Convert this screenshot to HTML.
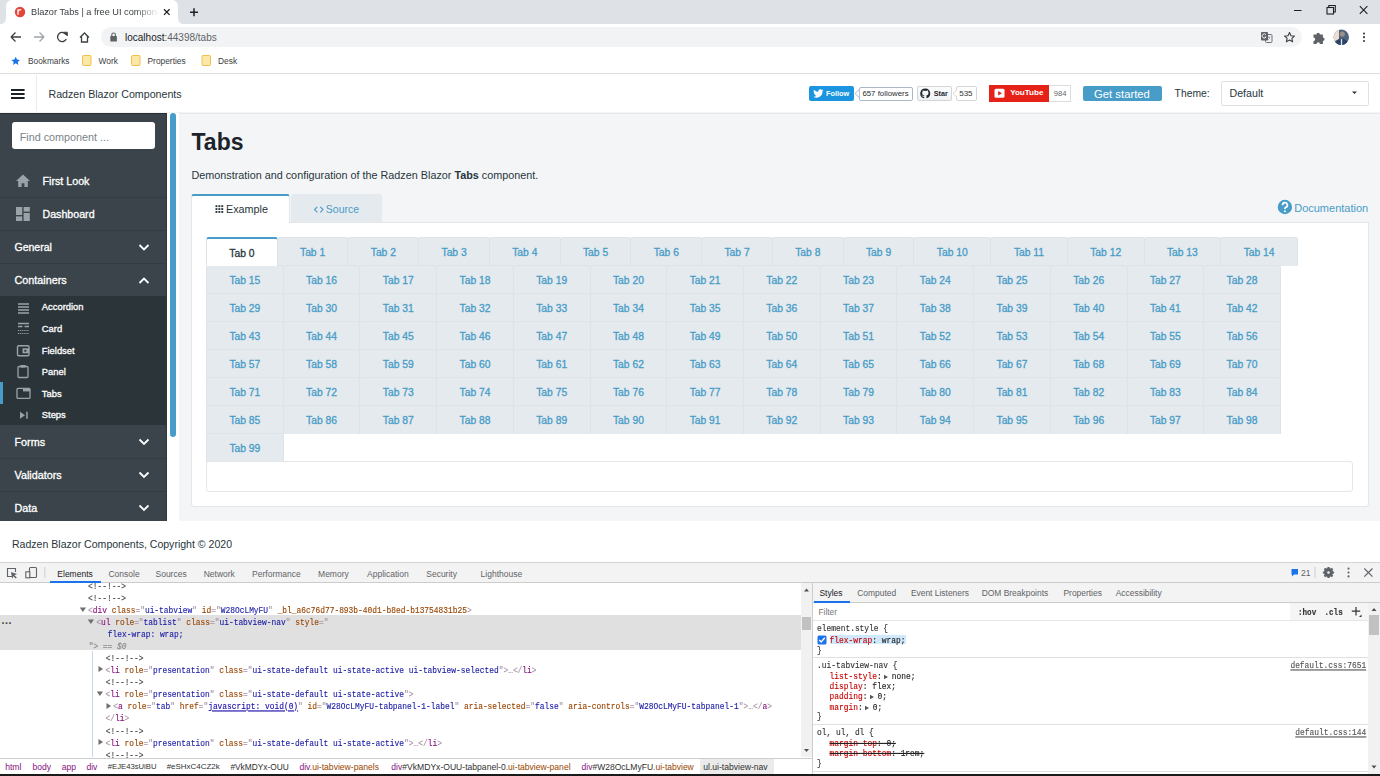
<!DOCTYPE html>
<html><head><meta charset="utf-8">
<style>
*{box-sizing:border-box;margin:0;padding:0}
html,body{width:1380px;height:776px;overflow:hidden;background:#fff;font-family:"Liberation Sans",sans-serif;position:relative}
.a{position:absolute}
.t{position:absolute;white-space:pre;line-height:1}
/* chrome */
#strip{left:0;top:0;width:1380px;height:24px;background:#dee1e6}
#ctab{left:6px;top:0;width:172px;height:24px;background:#fff;border-radius:7px 7px 0 0}
#toolbar{left:0;top:24px;width:1380px;height:24px;background:#fff}
#omni{left:101px;top:27px;width:1201px;height:20px;background:#f1f3f4;border-radius:10px}
#bm{left:0;top:48px;width:1380px;height:26px;background:#fff;border-bottom:1px solid #dadce0}
/* app header */
#hdr{left:0;top:74px;width:1380px;height:39px;background:#fff}
#side{left:0;top:113px;width:167px;height:408px;background:#3a444a;border-top:1px solid #262e34;border-right:1px solid #2e373c}
#gap{left:167px;top:113px;width:13px;height:408px;background:#fff}
#sbar{left:170px;top:113px;width:6px;height:324px;background:#479cc8;border-radius:3px}
#content{left:179px;top:113px;width:1201px;height:408px;background:#f4f5f7;border-top:1px solid #e6e9ec}
#footer{left:0;top:521px;width:1380px;height:42px;background:#fff}
#dev{left:0;top:561.5px;width:1380px;height:214.5px;background:#fff;border-top:1.5px solid #d4d4d4}
.tb{position:absolute;height:29px;background:#e5eaee;border:1px solid #dce3e9;border-bottom:0;border-radius:3px 3px 0 0;text-align:center}
.tb span{display:block;font-size:10.3px;line-height:1;padding-top:9.5px;color:#479cc8;-webkit-text-stroke:0.3px #479cc8}
.tb.act{background:#fff;border-top:2px solid #479cc8;z-index:2}
.tb.act span{color:#28363c;padding-top:9.5px;-webkit-text-stroke:0.3px #28363c}
.m{position:absolute;white-space:pre;font-family:"Liberation Mono",monospace;font-size:7.9px;line-height:10px;-webkit-text-stroke:0.12px currentColor;transform:scaleY(1.13);transform-origin:0 50%}
</style></head><body>
<div id="strip" class="a"></div>
<div id="ctab" class="a"></div>
<div id="toolbar" class="a"></div>
<div id="omni" class="a"></div>
<div id="bm" class="a"></div>

<!-- chrome tab strip content -->
<svg class="a" style="left:0;top:0" width="200" height="24">
 <path d="M0 24 Q6 24 6 18 L6 7 Q6 0 13 0 L171 0 Q178 0 178 7 L178 18 Q178 24 184 24 Z" fill="#fff"/>
 <circle cx="20" cy="12" r="5.2" fill="#e2463a"/>
 <path d="M18 9.3 v5.4 M18.2 11 q1.2 -1.6 3 -1.3" stroke="#fff" stroke-width="1.3" fill="none"/>
 <path d="M164 9.3 l5.6 5.6 M169.6 9.3 l-5.6 5.6" stroke="#202124" stroke-width="1.3"/>
 <path d="M194 8.3 v8 M190 12.3 h8" stroke="#202124" stroke-width="1.5"/>
</svg>
<div class="t" style="left:31px;top:7.5px;font-size:9.2px;color:#3c4043;width:128px;overflow:hidden;-webkit-mask-image:linear-gradient(90deg,#000 82%,transparent)">Blazor Tabs | a free UI componen</div>
<svg class="a" style="left:1280px;top:0" width="100" height="24">
 <path d="M14 10.5 h7.5" stroke="#202124" stroke-width="1"/>
 <rect x="47" y="7.5" width="6.5" height="6.5" fill="none" stroke="#202124" stroke-width="1.1"/>
 <path d="M48.8 7.3 v-1.8 h6.5 v6.5 h-1.8" fill="none" stroke="#202124" stroke-width="1.1"/>
 <path d="M79.8 6.2 l7.6 7.6 M87.4 6.2 l-7.6 7.6" stroke="#202124" stroke-width="1.1"/>
</svg>
<!-- toolbar -->
<svg class="a" style="left:0;top:24px" width="100" height="24">
 <path d="M11 13 h10 M11 13 l4.5 -4.5 M11 13 l4.5 4.5" stroke="#3c4043" stroke-width="1.3" fill="none"/>
 <path d="M44 13 h-10 M44 13 l-4.5 -4.5 M44 13 l-4.5 4.5" stroke="#a0a4a8" stroke-width="1.3" fill="none"/>
 <path d="M66 10.5 A4.6 4.6 0 1 0 66.3 15" stroke="#3c4043" stroke-width="1.4" fill="none"/>
 <path d="M63.6 8.2 L67.4 8.2 L67.4 12 Z" fill="#3c4043" stroke="#3c4043" stroke-width="0.8"/>
 <path d="M80 13.5 L84.5 9 L89 13.5 M81.5 12 V18 H87.5 V12" stroke="#3c4043" stroke-width="1.3" fill="none"/>
</svg>
<svg class="a" style="left:108px;top:31px" width="12" height="12">
 <rect x="2.3" y="5" width="6.6" height="5.5" rx="0.6" fill="#5f6368"/>
 <path d="M3.8 5.5 V3.8 A1.8 1.8 0 0 1 7.4 3.8 V5.5" stroke="#5f6368" stroke-width="1.1" fill="none"/>
</svg>
<div class="t" style="left:125px;top:33.2px;font-size:10px;color:#202124">localhost<span style="color:#5f6368">:44398/tabs</span></div>
<svg class="a" style="left:1255px;top:24px" width="125" height="24">
 <rect x="10.5" y="10.5" width="6.5" height="8" rx="1" fill="#f1f3f4" stroke="#6f7378" stroke-width="1"/>
 <path d="M12.3 13.2 h3 M13.8 12.5 v1 M12.6 16.5 q1.5 -1 2.4 -3" stroke="#8a8e92" stroke-width="0.7" fill="none"/>
 <rect x="6" y="8" width="7" height="8.5" rx="1" fill="#5f6368"/>
 <path d="M11 10.8 A2.1 2.1 0 1 0 11.1 13 H9.6" stroke="#fff" stroke-width="0.9" fill="none"/>
 <path d="M34.5 8.5 l1.5 3.2 3.4 0.4 -2.5 2.3 0.7 3.4 -3.1 -1.7 -3.1 1.7 0.7 -3.4 -2.5 -2.3 3.4 -0.4 z" fill="none" stroke="#3c4043" stroke-width="1.1" stroke-linejoin="round"/>
 <path d="M58.5 10.5 h3 a1.7 1.7 0 0 1 3.4 0 h3 v3 a1.7 1.7 0 0 1 0 3.4 v3 h-3 a1.7 1.7 0 0 0 -3.4 0 h-3 v-3 a1.7 1.7 0 0 0 0 -3.4 z" fill="#5f6368"/>
 <clipPath id="av"><circle cx="86.3" cy="13.2" r="7.7"/></clipPath>
 <g clip-path="url(#av)">
  <rect x="78" y="5" width="17" height="17" fill="#50657c"/>
  <rect x="78" y="5" width="6" height="12" fill="#ecdcd3"/>
  <circle cx="87.3" cy="10" r="2.6" fill="#9a8f8a"/>
  <path d="M78 23 Q80 15 86.5 14.5 Q93 15 95 23 Z" fill="#2b4466"/>
  <path d="M86.5 15 v7" stroke="#dfe6ee" stroke-width="1.3"/>
 </g>
 <circle cx="109" cy="9.5" r="1.1" fill="#3c4043"/><circle cx="109" cy="13.2" r="1.1" fill="#3c4043"/><circle cx="109" cy="17" r="1.1" fill="#3c4043"/>
</svg>
<!-- bookmarks -->
<svg class="a" style="left:0;top:48px" width="240" height="25">
 <path d="M15.7 8.8 l1.3 2.8 3 0.3 -2.3 2 0.7 3 -2.7 -1.6 -2.7 1.6 0.7 -3 -2.3 -2 3 -0.3 z" fill="#1a73e8"/>
 <g fill="#fce8a6" stroke="#f0c04c" stroke-width="1"><rect x="82.5" y="7.5" width="8.5" height="10" rx="1"/><rect x="131.5" y="7.5" width="8.5" height="10" rx="1"/><rect x="202" y="7.5" width="8.5" height="10" rx="1"/></g>
</svg>
<div class="t" style="left:28px;top:56.5px;font-size:8.3px;color:#3c4043">Bookmarks</div>
<div class="t" style="left:98.5px;top:56.5px;font-size:8.4px;color:#3c4043">Work</div>
<div class="t" style="left:147.5px;top:56.5px;font-size:8.4px;color:#3c4043">Properties</div>
<div class="t" style="left:218px;top:56.5px;font-size:8.4px;color:#3c4043">Desk</div>
<div id="hdr" class="a"></div>

<svg class="a" style="left:0;top:74px" width="40" height="39">
 <path d="M11 16 h13.6 M11 20 h13.6 M11 24 h13.6" stroke="#1b2227" stroke-width="1.9"/>
 <path d="M36.5 1 v36" stroke="#e8ebee" stroke-width="1"/>
</svg>
<div class="t" style="left:48.5px;top:89px;font-size:10.65px;color:#28363c">Radzen Blazor Components</div>
<!-- social -->
<div class="a" style="left:809px;top:86px;width:45px;height:15px;background:#1b95e0;border-radius:2px"></div>
<svg class="a" style="left:813px;top:88px" width="12" height="11"><path d="M10.5 2.3c-.4.2-.8.3-1.2.3.4-.3.8-.7.9-1.1-.4.2-.9.4-1.3.5a2.1 2.1 0 0 0-3.6 1.9A6 6 0 0 1 1 1.7a2.1 2.1 0 0 0 .6 2.8c-.3 0-.7-.1-.9-.3 0 1 .7 1.9 1.7 2.1-.3.1-.6.1-1 0 .3.8 1 1.4 2 1.5A4.2 4.2 0 0 1 .3 8.7 6 6 0 0 0 9.5 3.4v-.3c.4-.2.7-.5 1-.8z" fill="#fff"/></svg>
<div class="t" style="left:826px;top:89.8px;font-size:7.3px;color:#fff;font-weight:bold">Follow</div>
<div class="a" style="left:858.5px;top:86.5px;width:54.5px;height:14.5px;background:#fff;border:1px solid #aab8c6;border-radius:2px"></div>
<svg class="a" style="left:854px;top:89px" width="6" height="9"><path d="M5.2 0.5 L1 4.5 L5.2 8.5" fill="#fff" stroke="#aab8c6" stroke-width="1"/></svg>
<div class="t" style="left:862.4px;top:89.6px;font-size:7.85px;color:#292f33">657 followers</div>
<div class="a" style="left:917px;top:86px;width:35px;height:15px;background:linear-gradient(#fafbfc,#eff3f6);border:1px solid #d5d5d5;border-radius:2px"></div>
<svg class="a" style="left:920px;top:88px" width="11" height="11"><path d="M5.5.5a5 5 0 0 0-1.6 9.8c.3 0 .3-.1.3-.3V9c-1.4.3-1.7-.6-1.7-.6-.2-.6-.6-.8-.6-.8-.5-.3 0-.3 0-.3.5 0 .8.5.8.5.4.8 1.2.6 1.5.4 0-.3.2-.5.3-.6-1.1-.1-2.3-.6-2.3-2.5 0-.5.2-1 .5-1.3 0-.1-.2-.6 0-1.3 0 0 .4-.1 1.4.5a4.8 4.8 0 0 1 2.5 0c1-.7 1.4-.5 1.4-.5.3.7.1 1.2 0 1.3.3.4.5.8.5 1.3 0 1.9-1.2 2.4-2.3 2.5.2.2.3.5.3.9v1.4c0 .1.1.3.4.3A5 5 0 0 0 5.5.5z" fill="#24292e"/></svg>
<div class="t" style="left:933.8px;top:89.8px;font-size:7.2px;color:#24292e;font-weight:bold">Star</div>
<div class="a" style="left:955.5px;top:86px;width:21px;height:15px;background:#fff;border:1px solid #d5d5d5;border-radius:2px"></div>
<svg class="a" style="left:951.5px;top:89px" width="6" height="9"><path d="M5.2 0.5 L1 4.5 L5.2 8.5" fill="#fff" stroke="#d5d5d5" stroke-width="1"/></svg>
<div class="t" style="left:959.2px;top:89.6px;font-size:8px;color:#333">535</div>
<div class="a" style="left:989px;top:85px;width:60px;height:17px;background:#e62117"></div>
<svg class="a" style="left:994px;top:88px" width="12" height="11"><rect x="0.5" y="0.8" width="10" height="9" rx="1.5" fill="#fff"/><path d="M4.2 3 L8 5.3 L4.2 7.6 Z" fill="#e62117"/></svg>
<div class="t" style="left:1010.2px;top:88.8px;font-size:8.05px;color:#fff;font-weight:bold">YouTube</div>
<div class="a" style="left:1049px;top:85px;width:22px;height:17px;background:#fff;border:1px solid #ddd;border-left:0"></div>
<div class="t" style="left:1053.7px;top:89.8px;font-size:7.6px;color:#666">984</div>
<div class="a" style="left:1083px;top:85.5px;width:79px;height:15.5px;background:#479cc8;border-radius:2px"></div>
<div class="t" style="left:1094px;top:89px;font-size:11.3px;color:#fff">Get started</div>
<div class="t" style="left:1174.6px;top:89.3px;font-size:10.35px;color:#28363c">Theme:</div>
<div class="a" style="left:1221px;top:81px;width:147.5px;height:25px;background:#fff;border:1px solid #dfe3e7;border-radius:2px"></div>
<div class="t" style="left:1229.5px;top:88px;font-size:10.65px;color:#28363c">Default</div>
<svg class="a" style="left:1350px;top:90px" width="10" height="6"><path d="M2 1.5 L7 1.5 L4.5 4 Z" fill="#28363c"/></svg>
<div class="a" style="left:0;top:112px;width:1380px;height:1px;background:#f3f4f6"></div>
<div id="side" class="a"></div>

<div class="a" style="left:11.5px;top:122px;width:143.5px;height:26.5px;background:#fff;border-radius:3px"></div>
<div class="t" style="left:19.7px;top:132px;font-size:10.8px;color:#7a838a">Find component ...</div>
<!-- separators -->
<div class="a" style="left:0;top:197px;width:166px;height:1px;background:#333c41"></div>
<div class="a" style="left:0;top:230px;width:166px;height:1px;background:#333c41"></div>
<div class="a" style="left:0;top:263px;width:166px;height:1px;background:#333c41"></div>
<div class="a" style="left:0;top:296px;width:166px;height:129px;background:#2b3439"></div>
<div class="a" style="left:0;top:458px;width:166px;height:1px;background:#333c41"></div>
<div class="a" style="left:0;top:491px;width:166px;height:1px;background:#333c41"></div>
<div class="a" style="left:0;top:382px;width:3px;height:21.5px;background:#479cc8"></div>
<svg class="a" style="left:0;top:113px" width="166" height="408">
 <!-- home -->
 <path d="M23 61.5 L16 68 H18.2 V74 H21.6 V70.2 H24.4 V74 H27.8 V68 H30 Z" fill="#9aa3a8"/>
 <!-- dashboard -->
 <rect x="16" y="94" width="6.2" height="8" fill="#9aa3a8"/><rect x="16" y="103.4" width="6.2" height="4.6" fill="#9aa3a8"/>
 <rect x="23.6" y="94" width="6.2" height="4.6" fill="#9aa3a8"/><rect x="23.6" y="100" width="6.2" height="8" fill="#9aa3a8"/>
 <path d="M139.5 132.0 l4.5 4.5 l4.5 -4.5" stroke="#fff" stroke-width="1.8" fill="none"/> <path d="M139.5 170.0 l4.5 -4.5 l4.5 4.5" stroke="#fff" stroke-width="1.8" fill="none"/> <path d="M139.5 326.5 l4.5 4.5 l4.5 -4.5" stroke="#fff" stroke-width="1.8" fill="none"/> <path d="M139.5 359.5 l4.5 4.5 l4.5 -4.5" stroke="#fff" stroke-width="1.8" fill="none"/> <path d="M139.5 392.5 l4.5 4.5 l4.5 -4.5" stroke="#fff" stroke-width="1.8" fill="none"/>
 <!-- accordion -->
 <path d="M18 191 h11 M18 194 h11 M18 197 h11 M18 200 h11" stroke="#9aa3a8" stroke-width="1.3"/>
 <!-- card -->
 <path d="M18 210.5 h11 M18 213.5 h4.5 M24.5 213.5 h4.5" stroke="#9aa3a8" stroke-width="1.3"/>
 <path d="M18 217.5 h11 M18 220.5 h11" stroke="#9aa3a8" stroke-width="1.2" stroke-dasharray="1.2 0.9"/>
 <g transform="translate(0,2.3)"><!-- fieldset -->
 <rect x="17.5" y="230.5" width="11.5" height="10" rx="1.2" fill="none" stroke="#9aa3a8" stroke-width="1.4"/>
 <rect x="22.5" y="233" width="6.5" height="5" fill="#9aa3a8"/><rect x="24.3" y="234.6" width="2" height="1.8" fill="#2b3439"/>
 </g><g transform="translate(0,0.5)"><!-- panel -->
 <rect x="18" y="253" width="10" height="11" rx="1" fill="none" stroke="#9aa3a8" stroke-width="1.3"/>
 <rect x="20.5" y="251.5" width="5" height="2.6" fill="#9aa3a8"/>
 </g><g transform="translate(0,1.4)"><!-- tabs -->
 <rect x="17" y="274" width="13" height="10" rx="1" fill="none" stroke="#9aa3a8" stroke-width="1.3"/>
 <rect x="23" y="274" width="7" height="3" fill="#9aa3a8"/>
 </g><g transform="translate(0,2.8)"><!-- steps -->
 <path d="M20 296 L25 299.5 L20 303 Z" fill="#9aa3a8"/><rect x="26.2" y="296" width="1.5" height="7" fill="#9aa3a8"/></g>
</svg>
<div class="t" style="left:42.5px;top:176.2px;font-size:10.7px;color:#fff;-webkit-text-stroke:0.3px #fff">First Look</div>
<div class="t" style="left:42.5px;top:209.2px;font-size:10.65px;color:#fff;-webkit-text-stroke:0.3px #fff">Dashboard</div>
<div class="t" style="left:14.5px;top:242.2px;font-size:10.5px;color:#fff;-webkit-text-stroke:0.3px #fff">General</div>
<div class="t" style="left:14.5px;top:275.2px;font-size:10.8px;color:#fff;-webkit-text-stroke:0.3px #fff">Containers</div>
<div class="t" style="left:41.8px;top:302.1px;font-size:9.4px;color:#fff;-webkit-text-stroke:0.3px #fff">Accordion</div>
<div class="t" style="left:41.8px;top:323.9px;font-size:9.4px;color:#fff;-webkit-text-stroke:0.3px #fff">Card</div>
<div class="t" style="left:41.8px;top:345.6px;font-size:9.4px;color:#fff;-webkit-text-stroke:0.3px #fff">Fieldset</div>
<div class="t" style="left:41.8px;top:366.9px;font-size:9.4px;color:#fff;-webkit-text-stroke:0.3px #fff">Panel</div>
<div class="t" style="left:41.8px;top:388.6px;font-size:9.4px;color:#fff;-webkit-text-stroke:0.3px #fff">Tabs</div>
<div class="t" style="left:41.8px;top:410.1px;font-size:9.4px;color:#fff;-webkit-text-stroke:0.3px #fff">Steps</div>
<div class="t" style="left:14.5px;top:437.4px;font-size:10.8px;color:#fff;-webkit-text-stroke:0.3px #fff">Forms</div>
<div class="t" style="left:14.5px;top:470.2px;font-size:10.8px;color:#fff;-webkit-text-stroke:0.3px #fff">Validators</div>
<div class="t" style="left:14.5px;top:503px;font-size:10.8px;color:#fff;-webkit-text-stroke:0.3px #fff">Data</div>
<div id="gap" class="a"></div>
<div id="sbar" class="a"></div>
<div id="content" class="a"></div>
<div id="footer" class="a"></div>
<div class="t" style="left:191.5px;top:130.6px;font-size:23px;font-weight:bold;color:#1c2329">Tabs</div>
<div class="t" style="left:191.5px;top:170.2px;font-size:10.8px;color:#28363c">Demonstration and configuration of the Radzen Blazor <b>Tabs</b> component.</div>
<div class="a" style="left:191px;top:222px;width:1178px;height:285px;background:#fff;border:1px solid #e3e7ea;border-radius:0 0 3px 3px"></div>
<div class="a" style="left:191px;top:194px;width:99px;height:29px;background:#fff;border:1px solid #e3e7ea;border-top:2px solid #479cc8;border-bottom:0;border-radius:3px 3px 0 0"></div>
<div class="a" style="left:291px;top:194px;width:90.6px;height:28px;background:#e5eaee;border-radius:3px 3px 0 0"></div>
<svg class="a" style="left:214px;top:203.8px" width="12" height="12"><g fill="#28363c"><rect x="1.5" y="1.2" width="1.9" height="1.9"/><rect x="4.4" y="1.2" width="1.9" height="1.9"/><rect x="7.3" y="1.2" width="1.9" height="1.9"/><rect x="1.5" y="4.1" width="1.9" height="1.9"/><rect x="4.4" y="4.1" width="1.9" height="1.9"/><rect x="7.3" y="4.1" width="1.9" height="1.9"/><rect x="1.5" y="7" width="1.9" height="1.9"/><rect x="4.4" y="7" width="1.9" height="1.9"/><rect x="7.3" y="7" width="1.9" height="1.9"/></g></svg>
<div class="t" style="left:226px;top:204.1px;font-size:10.8px;color:#28363c">Example</div>
<svg class="a" style="left:313px;top:203.8px" width="13" height="12"><path d="M4.3 2.8 L1.6 5.6 L4.3 8.4 M7.3 2.8 L10 5.6 L7.3 8.4" stroke="#479cc8" stroke-width="1.15" fill="none"/></svg>
<div class="t" style="left:325.8px;top:204.1px;font-size:10.5px;color:#479cc8">Source</div>
<svg class="a" style="left:1277px;top:199px" width="16" height="16"><circle cx="7.9" cy="8" r="7.2" fill="#479cc8"/><path d="M5.6 6.2 A2.4 2.4 0 1 1 8.6 8.4 Q7.9 8.8 7.9 9.7 V10" stroke="#fff" stroke-width="1.7" fill="none"/><circle cx="7.9" cy="12.2" r="1" fill="#fff"/></svg>
<div class="t" style="left:1294.2px;top:202.5px;font-size:11px;color:#479cc8">Documentation</div>
<div class="tb act" style="left:206.00px;top:237px;width:71.74px"><span>Tab 0</span></div>
<div class="tb" style="left:276.74px;top:237px;width:71.74px"><span>Tab 1</span></div>
<div class="tb" style="left:347.48px;top:237px;width:71.74px"><span>Tab 2</span></div>
<div class="tb" style="left:418.22px;top:237px;width:71.74px"><span>Tab 3</span></div>
<div class="tb" style="left:488.96px;top:237px;width:71.74px"><span>Tab 4</span></div>
<div class="tb" style="left:559.70px;top:237px;width:71.74px"><span>Tab 5</span></div>
<div class="tb" style="left:630.44px;top:237px;width:71.74px"><span>Tab 6</span></div>
<div class="tb" style="left:701.18px;top:237px;width:71.74px"><span>Tab 7</span></div>
<div class="tb" style="left:771.92px;top:237px;width:71.74px"><span>Tab 8</span></div>
<div class="tb" style="left:842.66px;top:237px;width:71.74px"><span>Tab 9</span></div>
<div class="tb" style="left:913.40px;top:237px;width:77.71px"><span>Tab 10</span></div>
<div class="tb" style="left:990.11px;top:237px;width:77.71px"><span>Tab 11</span></div>
<div class="tb" style="left:1066.82px;top:237px;width:77.71px"><span>Tab 12</span></div>
<div class="tb" style="left:1143.53px;top:237px;width:77.71px"><span>Tab 13</span></div>
<div class="tb" style="left:1220.24px;top:237px;width:77.71px"><span>Tab 14</span></div>
<div class="tb" style="left:206.00px;top:265px;width:77.71px"><span>Tab 15</span></div>
<div class="tb" style="left:282.71px;top:265px;width:77.71px"><span>Tab 16</span></div>
<div class="tb" style="left:359.42px;top:265px;width:77.71px"><span>Tab 17</span></div>
<div class="tb" style="left:436.13px;top:265px;width:77.71px"><span>Tab 18</span></div>
<div class="tb" style="left:512.84px;top:265px;width:77.71px"><span>Tab 19</span></div>
<div class="tb" style="left:589.55px;top:265px;width:77.71px"><span>Tab 20</span></div>
<div class="tb" style="left:666.26px;top:265px;width:77.71px"><span>Tab 21</span></div>
<div class="tb" style="left:742.97px;top:265px;width:77.71px"><span>Tab 22</span></div>
<div class="tb" style="left:819.68px;top:265px;width:77.71px"><span>Tab 23</span></div>
<div class="tb" style="left:896.39px;top:265px;width:77.71px"><span>Tab 24</span></div>
<div class="tb" style="left:973.10px;top:265px;width:77.71px"><span>Tab 25</span></div>
<div class="tb" style="left:1049.81px;top:265px;width:77.71px"><span>Tab 26</span></div>
<div class="tb" style="left:1126.52px;top:265px;width:77.71px"><span>Tab 27</span></div>
<div class="tb" style="left:1203.23px;top:265px;width:77.71px"><span>Tab 28</span></div>
<div class="tb" style="left:206.00px;top:293px;width:77.71px"><span>Tab 29</span></div>
<div class="tb" style="left:282.71px;top:293px;width:77.71px"><span>Tab 30</span></div>
<div class="tb" style="left:359.42px;top:293px;width:77.71px"><span>Tab 31</span></div>
<div class="tb" style="left:436.13px;top:293px;width:77.71px"><span>Tab 32</span></div>
<div class="tb" style="left:512.84px;top:293px;width:77.71px"><span>Tab 33</span></div>
<div class="tb" style="left:589.55px;top:293px;width:77.71px"><span>Tab 34</span></div>
<div class="tb" style="left:666.26px;top:293px;width:77.71px"><span>Tab 35</span></div>
<div class="tb" style="left:742.97px;top:293px;width:77.71px"><span>Tab 36</span></div>
<div class="tb" style="left:819.68px;top:293px;width:77.71px"><span>Tab 37</span></div>
<div class="tb" style="left:896.39px;top:293px;width:77.71px"><span>Tab 38</span></div>
<div class="tb" style="left:973.10px;top:293px;width:77.71px"><span>Tab 39</span></div>
<div class="tb" style="left:1049.81px;top:293px;width:77.71px"><span>Tab 40</span></div>
<div class="tb" style="left:1126.52px;top:293px;width:77.71px"><span>Tab 41</span></div>
<div class="tb" style="left:1203.23px;top:293px;width:77.71px"><span>Tab 42</span></div>
<div class="tb" style="left:206.00px;top:321px;width:77.71px"><span>Tab 43</span></div>
<div class="tb" style="left:282.71px;top:321px;width:77.71px"><span>Tab 44</span></div>
<div class="tb" style="left:359.42px;top:321px;width:77.71px"><span>Tab 45</span></div>
<div class="tb" style="left:436.13px;top:321px;width:77.71px"><span>Tab 46</span></div>
<div class="tb" style="left:512.84px;top:321px;width:77.71px"><span>Tab 47</span></div>
<div class="tb" style="left:589.55px;top:321px;width:77.71px"><span>Tab 48</span></div>
<div class="tb" style="left:666.26px;top:321px;width:77.71px"><span>Tab 49</span></div>
<div class="tb" style="left:742.97px;top:321px;width:77.71px"><span>Tab 50</span></div>
<div class="tb" style="left:819.68px;top:321px;width:77.71px"><span>Tab 51</span></div>
<div class="tb" style="left:896.39px;top:321px;width:77.71px"><span>Tab 52</span></div>
<div class="tb" style="left:973.10px;top:321px;width:77.71px"><span>Tab 53</span></div>
<div class="tb" style="left:1049.81px;top:321px;width:77.71px"><span>Tab 54</span></div>
<div class="tb" style="left:1126.52px;top:321px;width:77.71px"><span>Tab 55</span></div>
<div class="tb" style="left:1203.23px;top:321px;width:77.71px"><span>Tab 56</span></div>
<div class="tb" style="left:206.00px;top:349px;width:77.71px"><span>Tab 57</span></div>
<div class="tb" style="left:282.71px;top:349px;width:77.71px"><span>Tab 58</span></div>
<div class="tb" style="left:359.42px;top:349px;width:77.71px"><span>Tab 59</span></div>
<div class="tb" style="left:436.13px;top:349px;width:77.71px"><span>Tab 60</span></div>
<div class="tb" style="left:512.84px;top:349px;width:77.71px"><span>Tab 61</span></div>
<div class="tb" style="left:589.55px;top:349px;width:77.71px"><span>Tab 62</span></div>
<div class="tb" style="left:666.26px;top:349px;width:77.71px"><span>Tab 63</span></div>
<div class="tb" style="left:742.97px;top:349px;width:77.71px"><span>Tab 64</span></div>
<div class="tb" style="left:819.68px;top:349px;width:77.71px"><span>Tab 65</span></div>
<div class="tb" style="left:896.39px;top:349px;width:77.71px"><span>Tab 66</span></div>
<div class="tb" style="left:973.10px;top:349px;width:77.71px"><span>Tab 67</span></div>
<div class="tb" style="left:1049.81px;top:349px;width:77.71px"><span>Tab 68</span></div>
<div class="tb" style="left:1126.52px;top:349px;width:77.71px"><span>Tab 69</span></div>
<div class="tb" style="left:1203.23px;top:349px;width:77.71px"><span>Tab 70</span></div>
<div class="tb" style="left:206.00px;top:377px;width:77.71px"><span>Tab 71</span></div>
<div class="tb" style="left:282.71px;top:377px;width:77.71px"><span>Tab 72</span></div>
<div class="tb" style="left:359.42px;top:377px;width:77.71px"><span>Tab 73</span></div>
<div class="tb" style="left:436.13px;top:377px;width:77.71px"><span>Tab 74</span></div>
<div class="tb" style="left:512.84px;top:377px;width:77.71px"><span>Tab 75</span></div>
<div class="tb" style="left:589.55px;top:377px;width:77.71px"><span>Tab 76</span></div>
<div class="tb" style="left:666.26px;top:377px;width:77.71px"><span>Tab 77</span></div>
<div class="tb" style="left:742.97px;top:377px;width:77.71px"><span>Tab 78</span></div>
<div class="tb" style="left:819.68px;top:377px;width:77.71px"><span>Tab 79</span></div>
<div class="tb" style="left:896.39px;top:377px;width:77.71px"><span>Tab 80</span></div>
<div class="tb" style="left:973.10px;top:377px;width:77.71px"><span>Tab 81</span></div>
<div class="tb" style="left:1049.81px;top:377px;width:77.71px"><span>Tab 82</span></div>
<div class="tb" style="left:1126.52px;top:377px;width:77.71px"><span>Tab 83</span></div>
<div class="tb" style="left:1203.23px;top:377px;width:77.71px"><span>Tab 84</span></div>
<div class="tb" style="left:206.00px;top:405px;width:77.71px"><span>Tab 85</span></div>
<div class="tb" style="left:282.71px;top:405px;width:77.71px"><span>Tab 86</span></div>
<div class="tb" style="left:359.42px;top:405px;width:77.71px"><span>Tab 87</span></div>
<div class="tb" style="left:436.13px;top:405px;width:77.71px"><span>Tab 88</span></div>
<div class="tb" style="left:512.84px;top:405px;width:77.71px"><span>Tab 89</span></div>
<div class="tb" style="left:589.55px;top:405px;width:77.71px"><span>Tab 90</span></div>
<div class="tb" style="left:666.26px;top:405px;width:77.71px"><span>Tab 91</span></div>
<div class="tb" style="left:742.97px;top:405px;width:77.71px"><span>Tab 92</span></div>
<div class="tb" style="left:819.68px;top:405px;width:77.71px"><span>Tab 93</span></div>
<div class="tb" style="left:896.39px;top:405px;width:77.71px"><span>Tab 94</span></div>
<div class="tb" style="left:973.10px;top:405px;width:77.71px"><span>Tab 95</span></div>
<div class="tb" style="left:1049.81px;top:405px;width:77.71px"><span>Tab 96</span></div>
<div class="tb" style="left:1126.52px;top:405px;width:77.71px"><span>Tab 97</span></div>
<div class="tb" style="left:1203.23px;top:405px;width:77.71px"><span>Tab 98</span></div>
<div class="tb" style="left:206.00px;top:433px;width:77.71px"><span>Tab 99</span></div>
<div class="a" style="left:206px;top:461px;width:1147px;height:30.5px;border:1px solid #e3e7ea;border-radius:3px"></div>
<div class="t" style="left:12px;top:539px;font-size:10.55px;color:#28363c">Radzen Blazor Components, Copyright © 2020</div>

<div id="dev" class="a"></div>
<div class="a" style="left:0;top:563px;width:1380px;height:20px;background:#f3f3f3;border-bottom:1px solid #cccccc"></div>
<div class="a" style="left:0;top:615px;width:801px;height:35px;background:#e0e0e0"></div>
<div class="t" style="left:1px;top:614.5px;font-size:11px;color:#444;font-weight:bold;font-family:'Liberation Sans'">…</div>
<div class="a" style="left:91.5px;top:651px;width:1px;height:106px;background:#c7d7ea"></div>
<div class="m" style="left:88px;top:581.6px"><span style="color:#474747">&lt;!--!--&gt;</span></div>
<div class="m" style="left:88px;top:593.6px"><span style="color:#474747">&lt;!--!--&gt;</span></div>
<div class="m" style="left:88px;top:605.9px"><span style="color:#a894a6">&lt;</span><span style="color:#881280">div</span><span style="color:#881280"> </span><span style="color:#994500">class</span><span style="color:#a894a6">="</span><span style="color:#1a1aa6">ui-tabview</span><span style="color:#a894a6">"</span><span style="color:#881280"> </span><span style="color:#994500">id</span><span style="color:#a894a6">="</span><span style="color:#1a1aa6">W28OcLMyFU</span><span style="color:#a894a6">"</span><span style="color:#881280"> </span><span style="color:#994500">_bl_a6c76d77-893b-40d1-b8ed-b13754831b25</span><span style="color:#a894a6">&gt;</span></div>
<svg class="a" style="left:78.5px;top:606.0px" width="8" height="7"><path d="M0.8 1.5 L7 1.5 L3.9 6 Z" fill="#6e6e6e"/></svg>
<div class="m" style="left:96.2px;top:618.1px"><span style="color:#a894a6">&lt;</span><span style="color:#881280">ul</span><span style="color:#881280"> </span><span style="color:#994500">role</span><span style="color:#a894a6">="</span><span style="color:#1a1aa6">tablist</span><span style="color:#a894a6">"</span><span style="color:#881280"> </span><span style="color:#994500">class</span><span style="color:#a894a6">="</span><span style="color:#1a1aa6">ui-tabview-nav</span><span style="color:#a894a6">"</span><span style="color:#881280"> </span><span style="color:#994500">style</span><span style="color:#a894a6">="</span></div>
<svg class="a" style="left:86.7px;top:618.2px" width="8" height="7"><path d="M0.8 1.5 L7 1.5 L3.9 6 Z" fill="#6e6e6e"/></svg>
<div class="m" style="left:107.8px;top:629.9px"><span style="color:#1a1aa6">flex-wrap: wrap;</span></div>
<div class="m" style="left:88.7px;top:641.8px"><span style="color:#8a8a8a">"&gt;</span></div>
<div class="m" style="left:105.7px;top:653.6px"><span style="color:#474747">&lt;!--!--&gt;</span></div>
<div class="m" style="left:105.5px;top:665.6px"><span style="color:#a894a6">&lt;</span><span style="color:#881280">li</span><span style="color:#881280"> </span><span style="color:#994500">role</span><span style="color:#a894a6">="</span><span style="color:#1a1aa6">presentation</span><span style="color:#a894a6">"</span><span style="color:#881280"> </span><span style="color:#994500">class</span><span style="color:#a894a6">="</span><span style="color:#1a1aa6">ui-state-default ui-state-active ui-tabview-selected</span><span style="color:#a894a6">"</span><span style="color:#a894a6">&gt;…&lt;/</span><span style="color:#881280">li</span><span style="color:#a894a6">&gt;</span></div>
<svg class="a" style="left:97.0px;top:665.2px" width="7" height="8"><path d="M1.5 1 L6 4 L1.5 7 Z" fill="#6e6e6e"/></svg>
<div class="m" style="left:105.7px;top:677.6px"><span style="color:#474747">&lt;!--!--&gt;</span></div>
<div class="m" style="left:105.5px;top:689.9px"><span style="color:#a894a6">&lt;</span><span style="color:#881280">li</span><span style="color:#881280"> </span><span style="color:#994500">role</span><span style="color:#a894a6">="</span><span style="color:#1a1aa6">presentation</span><span style="color:#a894a6">"</span><span style="color:#881280"> </span><span style="color:#994500">class</span><span style="color:#a894a6">="</span><span style="color:#1a1aa6">ui-state-default ui-state-active</span><span style="color:#a894a6">"</span><span style="color:#a894a6">&gt;</span></div>
<svg class="a" style="left:96.0px;top:690.0px" width="8" height="7"><path d="M0.8 1.5 L7 1.5 L3.9 6 Z" fill="#6e6e6e"/></svg>
<div class="m" style="left:113.3px;top:702.1px"><span style="color:#a894a6">&lt;</span><span style="color:#881280">a</span><span style="color:#881280"> </span><span style="color:#994500">role</span><span style="color:#a894a6">="</span><span style="color:#1a1aa6">tab</span><span style="color:#a894a6">"</span><span style="color:#881280"> </span><span style="color:#994500">href</span><span style="color:#a894a6">="</span><span style="color:#1a0dab;text-decoration:underline">javascript: void(0)</span><span style="color:#a894a6">"</span><span style="color:#881280"> </span><span style="color:#994500">id</span><span style="color:#a894a6">="</span><span style="color:#1a1aa6">W28OcLMyFU-tabpanel-1-label</span><span style="color:#a894a6">"</span><span style="color:#881280"> </span><span style="color:#994500">aria-selected</span><span style="color:#a894a6">="</span><span style="color:#1a1aa6">false</span><span style="color:#a894a6">"</span><span style="color:#881280"> </span><span style="color:#994500">aria-controls</span><span style="color:#a894a6">="</span><span style="color:#1a1aa6">W28OcLMyFU-tabpanel-1</span><span style="color:#a894a6">"</span><span style="color:#a894a6">&gt;…&lt;/</span><span style="color:#881280">a</span><span style="color:#a894a6">&gt;</span></div>
<svg class="a" style="left:104.8px;top:701.7px" width="7" height="8"><path d="M1.5 1 L6 4 L1.5 7 Z" fill="#6e6e6e"/></svg>
<div class="m" style="left:105.5px;top:714.3px"><span style="color:#a894a6">&lt;/</span><span style="color:#881280">li</span><span style="color:#a894a6">&gt;</span></div>
<div class="m" style="left:105.7px;top:726.6px"><span style="color:#474747">&lt;!--!--&gt;</span></div>
<div class="m" style="left:105.5px;top:738.6px"><span style="color:#a894a6">&lt;</span><span style="color:#881280">li</span><span style="color:#881280"> </span><span style="color:#994500">role</span><span style="color:#a894a6">="</span><span style="color:#1a1aa6">presentation</span><span style="color:#a894a6">"</span><span style="color:#881280"> </span><span style="color:#994500">class</span><span style="color:#a894a6">="</span><span style="color:#1a1aa6">ui-state-default ui-state-active</span><span style="color:#a894a6">"</span><span style="color:#a894a6">&gt;…&lt;/</span><span style="color:#881280">li</span><span style="color:#a894a6">&gt;</span></div>
<svg class="a" style="left:97.0px;top:738.2px" width="7" height="8"><path d="M1.5 1 L6 4 L1.5 7 Z" fill="#6e6e6e"/></svg>
<div class="m" style="left:105.7px;top:750.6px"><span style="color:#474747">&lt;!--!--&gt;</span></div>
<div class="m" style="left:102.8px;top:641.8px;color:#8a8a8a;font-style:italic">== $0</div>
<div class="t" style="left:57.33px;top:569.6px;font-size:8.5px;color:#202124">Elements</div>
<div class="t" style="left:108.46px;top:569.6px;font-size:8.5px;color:#5f6368">Console</div>
<div class="t" style="left:155.51px;top:569.6px;font-size:8.5px;color:#5f6368">Sources</div>
<div class="t" style="left:203.66px;top:569.6px;font-size:8.5px;color:#5f6368">Network</div>
<div class="t" style="left:252.12px;top:569.6px;font-size:8.5px;color:#5f6368">Performance</div>
<div class="t" style="left:318.05px;top:569.6px;font-size:8.5px;color:#5f6368">Memory</div>
<div class="t" style="left:367.06px;top:569.6px;font-size:8.5px;color:#5f6368">Application</div>
<div class="t" style="left:426.25px;top:569.6px;font-size:8.5px;color:#5f6368">Security</div>
<div class="t" style="left:480.60px;top:569.6px;font-size:8.5px;color:#5f6368">Lighthouse</div>
<div class="a" style="left:50px;top:581px;width:51px;height:2px;background:#1a73e8"></div>
<svg class="a" style="left:0;top:563px" width="50" height="19">
 <path d="M12.5 13.5 H7.5 V5.5 H15.5 V9" fill="none" stroke="#5f6368" stroke-width="1.1"/>
 <path d="M11 9 L17 11 L14.4 12.2 L16.8 14.6 L15.8 15.6 L13.4 13.2 L12.2 15.8 Z" fill="#5f6368"/>
 <rect x="29.5" y="4.5" width="7" height="10" rx="1" fill="none" stroke="#5f6368" stroke-width="1.1"/>
 <rect x="25.8" y="8.8" width="4" height="6" fill="#f3f3f3" stroke="#5f6368" stroke-width="1.1"/>
 <path d="M44.8 4 V15" stroke="#cbcdd1" stroke-width="1"/>
</svg>
<svg class="a" style="left:1285px;top:563px" width="95" height="19">
 <path d="M6.5 6 H13 V11.5 H9 L7 13.5 V11.5 H6.5 Z" fill="#1a73e8"/>
 <path d="M30 4 V15" stroke="#cbcdd1" stroke-width="1"/>
 <g transform="translate(43.5,9.5)"><circle r="3.4" fill="none" stroke="#5f6368" stroke-width="2.3"/><g stroke="#5f6368" stroke-width="2.2"><path d="M0 -5.6 V5.6 M-5.6 0 H5.6 M-4 -4 L4 4 M-4 4 L4 -4"/></g><circle r="1.3" fill="#f3f3f3"/></g>
 <circle cx="63.5" cy="5.6" r="1.05" fill="#5f6368"/><circle cx="63.5" cy="9.5" r="1.05" fill="#5f6368"/><circle cx="63.5" cy="13.4" r="1.05" fill="#5f6368"/>
 <path d="M79.3 5.5 L87.5 13.7 M87.5 5.5 L79.3 13.7" stroke="#5f6368" stroke-width="1.2"/>
</svg>
<div class="t" style="left:1301px;top:568.5px;font-size:8.6px;color:#5f6368">21</div>
<div class="a" style="left:801px;top:583px;width:11px;height:174px;background:#f1f1f1"></div>
<svg class="a" style="left:801px;top:583px" width="11" height="174"><path d="M3 8.5 L5.5 5.5 L8 8.5 Z" fill="#505050"/><path d="M3 166 L5.5 169 L8 166 Z" fill="#505050"/></svg>
<div class="a" style="left:802px;top:616.5px;width:9px;height:13px;background:#c1c1c1"></div>
<div class="a" style="left:812px;top:583px;width:1px;height:193px;background:#cbcdd1"></div>
<div class="a" style="left:813px;top:583px;width:567px;height:19.5px;background:#f3f3f3;border-bottom:1px solid #cccccc"></div>
<div class="t" style="left:819.49px;top:588.5px;font-size:8.45px;color:#202124">Styles</div>
<div class="t" style="left:857.26px;top:588.5px;font-size:8.45px;color:#5f6368">Computed</div>
<div class="t" style="left:910.88px;top:588.5px;font-size:8.45px;color:#5f6368">Event Listeners</div>
<div class="t" style="left:981.66px;top:588.5px;font-size:8.45px;color:#5f6368">DOM Breakpoints</div>
<div class="t" style="left:1063.44px;top:588.5px;font-size:8.45px;color:#5f6368">Properties</div>
<div class="t" style="left:1115.69px;top:588.5px;font-size:8.45px;color:#5f6368">Accessibility</div>
<div class="a" style="left:813.5px;top:601px;width:36px;height:2px;background:#1a73e8"></div>
<div class="a" style="left:813px;top:603px;width:555px;height:18px;background:#fff;border-bottom:1px solid #e6e6e6"></div>
<div class="a" style="left:1290px;top:603px;width:78px;height:17px;background:#f5f5f5"></div>
<div class="t" style="left:818.5px;top:607.5px;font-size:8.3px;color:#757575">Filter</div>
<div class="m" style="left:1298px;top:607.5px;color:#333;font-weight:bold;font-size:7.6px">:hov</div>
<div class="m" style="left:1324.5px;top:607.5px;color:#333;font-weight:bold;font-size:7.6px">.cls</div>
<svg class="a" style="left:1350px;top:605px" width="14" height="14"><path d="M6 2 V10.5 M1.8 6.2 H10.2" stroke="#333" stroke-width="1.2"/><path d="M11.5 9.5 V12 H9 Z" fill="#333"/></svg>
<div class="a" style="left:1368px;top:603px;width:12px;height:171px;background:#f1f1f1"></div>
<svg class="a" style="left:1368px;top:603px" width="12" height="171"><path d="M3.5 8 L6 5 L8.5 8 Z" fill="#505050"/><path d="M3.5 162.5 L6 165.5 L8.5 162.5 Z" fill="#505050"/></svg>
<div class="a" style="left:1369px;top:614.5px;width:10px;height:20px;background:#c1c1c1"></div>
<div class="m" style="left:817px;top:624.0px;"><span style="color:#333">element.style {</span></div>
<div class="a" style="left:829.5px;top:635px;width:76px;height:9px;background:#cfe8fc"></div>
<svg class="a" style="left:816.5px;top:634.8px" width="10" height="10"><rect x="0.5" y="0.5" width="9" height="9" rx="1.5" fill="#1a73e8"/><path d="M2.3 5 L4.2 7 L7.8 2.8" stroke="#fff" stroke-width="1.4" fill="none"/></svg>
<div class="m" style="left:829.6px;top:635.8px;"><span style="color:#c80000">flex-wrap</span><span style="color:#222">: wrap;</span></div>
<div class="m" style="left:817px;top:646.0px;"><span style="color:#333">}</span></div>
<div class="a" style="left:813px;top:657px;width:555px;height:1px;background:#e0e0e0"></div>
<div class="m" style="left:817px;top:660.8px;"><span style="color:#333">.ui-tabview-nav {</span></div>
<div class="m" style="left:1290.4px;top:660.8px;"><span style="color:#555;text-decoration:underline">default.css:7651</span></div>
<div class="m" style="left:829.6px;top:672.0px;"><span style="color:#c80000">list-style</span><span style="color:#222">:</span><span style="display:inline-block;width:0;height:0;border-left:4px solid #555;border-top:2.2px solid transparent;border-bottom:2.2px solid transparent;margin:0 3.5px 0 2.5px;vertical-align:0.3px"></span><span style="color:#222">none;</span></div>
<div class="m" style="left:829.6px;top:682.3px;"><span style="color:#c80000">display</span><span style="color:#222">: flex;</span></div>
<div class="m" style="left:829.6px;top:692.3px;"><span style="color:#c80000">padding</span><span style="color:#222">:</span><span style="display:inline-block;width:0;height:0;border-left:4px solid #555;border-top:2.2px solid transparent;border-bottom:2.2px solid transparent;margin:0 3.5px 0 2.5px;vertical-align:0.3px"></span><span style="color:#222">0;</span></div>
<div class="m" style="left:829.6px;top:702.5px;"><span style="color:#c80000">margin</span><span style="color:#222">:</span><span style="display:inline-block;width:0;height:0;border-left:4px solid #555;border-top:2.2px solid transparent;border-bottom:2.2px solid transparent;margin:0 3.5px 0 2.5px;vertical-align:0.3px"></span><span style="color:#222">0;</span></div>
<div class="m" style="left:817px;top:712.3px;"><span style="color:#333">}</span></div>
<div class="a" style="left:813px;top:724px;width:555px;height:1px;background:#e0e0e0"></div>
<div class="m" style="left:817px;top:727.7px;"><span style="color:#333">ol, ul, dl {</span></div>
<div class="m" style="left:1295.3px;top:727.7px;"><span style="color:#555;text-decoration:underline">default.css:144</span></div>
<div class="m" style="left:829.6px;top:739.0px;"><span style="text-decoration:line-through;text-decoration-color:#222"><span style="color:#c80000">margin-top</span><span style="color:#222">: 0;</span></span></div>
<div class="m" style="left:829.6px;top:748.8px;"><span style="text-decoration:line-through;text-decoration-color:#222"><span style="color:#c80000">margin-bottom</span><span style="color:#222">: 1rem;</span></span></div>
<div class="m" style="left:817px;top:759.0px;"><span style="color:#333">}</span></div>
<div class="a" style="left:813px;top:771px;width:555px;height:1px;background:#e0e0e0"></div>
<div class="a" style="left:0;top:757.5px;width:812px;height:17px;background:#fff;border-top:1px solid #cbcdd1"></div>
<div class="a" style="left:699.5px;top:758.5px;width:74.5px;height:15.5px;background:#ebebeb"></div>
<div class="t" style="left:5.2px;top:762.5px;font-size:8.60px"><span style="color:#881280">html</span></div>
<div class="t" style="left:32.5px;top:762.5px;font-size:8.60px"><span style="color:#881280">body</span></div>
<div class="t" style="left:61.7px;top:762.5px;font-size:8.60px"><span style="color:#881280">app</span></div>
<div class="t" style="left:86.4px;top:762.5px;font-size:8.60px"><span style="color:#881280">div</span></div>
<div class="t" style="left:107.8px;top:762.5px;font-size:7.69px"><span style="color:#303030">#EJE43sUiBU</span></div>
<div class="t" style="left:166.7px;top:762.5px;font-size:7.95px"><span style="color:#303030">#eSHxC4CZ2k</span></div>
<div class="t" style="left:230.4px;top:762.5px;font-size:8.37px"><span style="color:#303030">#VkMDYx-OUU</span></div>
<div class="t" style="left:299.4px;top:762.5px;font-size:8.60px"><span style="color:#881280">div</span><span style="color:#994500">.ui-tabview-panels</span></div>
<div class="t" style="left:391.3px;top:762.5px;font-size:8.58px"><span style="color:#881280">div</span><span style="color:#303030">#VkMDYx-OUU-tabpanel-0</span><span style="color:#994500">.ui-tabview-panel</span></div>
<div class="t" style="left:581.6px;top:762.5px;font-size:8.52px"><span style="color:#881280">div</span><span style="color:#303030">#W28OcLMyFU</span><span style="color:#994500">.ui-tabview</span></div>
<div class="t" style="left:703.2px;top:762.5px;font-size:8.60px"><span style="color:#303030">ul.ui-tabview-nav</span></div>
<div class="a" style="left:0;top:774px;width:1380px;height:2px;background:#1a1a1a"></div>
</body></html>
